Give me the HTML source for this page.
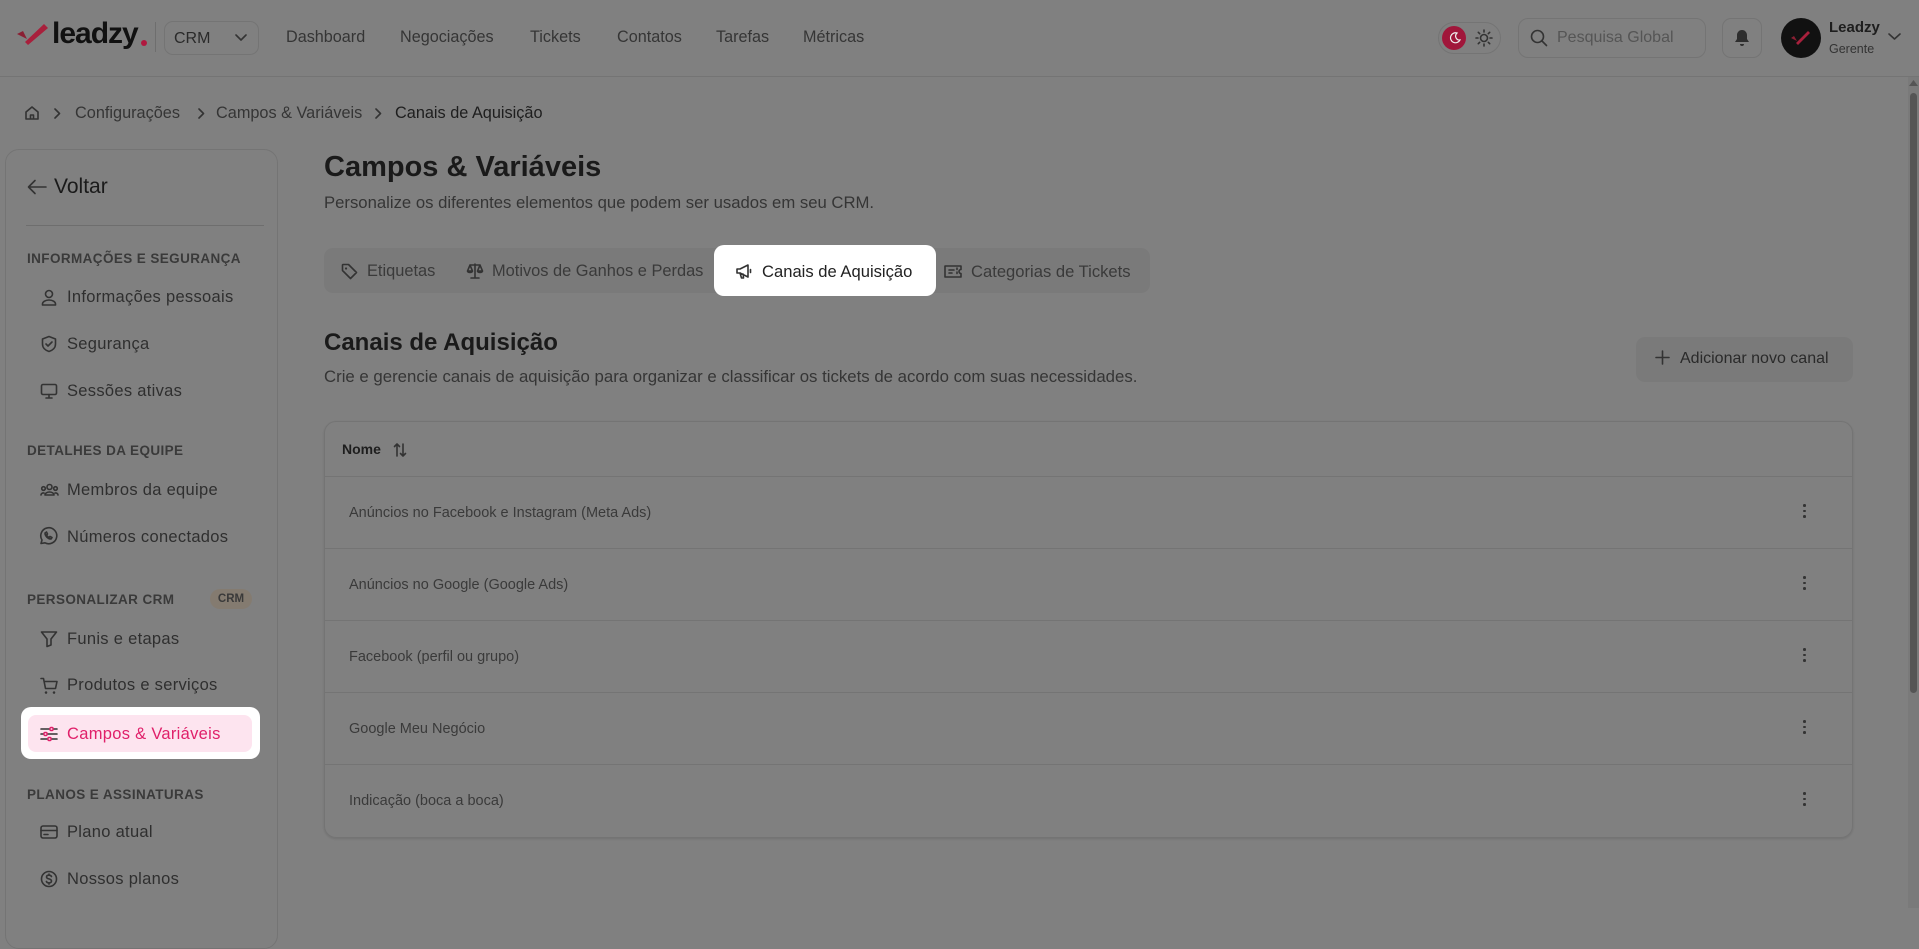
<!DOCTYPE html>
<html><head><meta charset="utf-8">
<style>
*{box-sizing:border-box;margin:0;padding:0}
body{width:1919px;height:908px;overflow:hidden;background:#808080;font-family:"Liberation Sans",sans-serif;color:#2a2a2a;position:relative}
.a{position:absolute;white-space:nowrap}
svg{display:block}
.ic{stroke:#333;fill:none;stroke-width:1.6;stroke-linecap:round;stroke-linejoin:round}
.nav{font-size:16.2px;color:#353535;top:28px}
.sec{font-size:13.5px;font-weight:bold;color:#3a3a3a;letter-spacing:.4px;left:27px}
.it{font-size:16.5px;color:#2f2f2f;left:67px;letter-spacing:.3px}
.sic{left:40px}
.row{position:absolute;left:0;right:0;height:72px;border-top:1px solid #747474}
.row span{position:absolute;left:24px;top:28px;font-size:14.5px;color:#3a3a3a}
.row b{position:absolute;right:46px;top:27px;width:3px}
.row b i{display:block;width:2.5px;height:2.5px;background:#333;border-radius:50%;margin-bottom:3px}
</style></head><body>
<!-- header -->
<div class="a" style="left:0;top:76px;width:1919px;height:1px;background:#747474"></div>
<svg class="a" style="left:15px;top:22px" width="34" height="24" viewBox="0 0 34 24"><path d="M2 12 L8 9 L12 17 Z" fill="#8a1f33"/><path d="M10 20 L29 2 L33 6 L13 23 Z" fill="#a8203c"/></svg>
<div class="a" style="left:52px;top:17px;font-size:30px;font-weight:bold;color:#111;letter-spacing:-1px">leadzy</div>
<div class="a" style="left:141px;top:40px;width:6px;height:6px;border-radius:50%;background:#b0183f"></div>
<div class="a" style="left:155px;top:22px;width:1px;height:30px;background:#6e6e6e"></div>
<div class="a" style="left:164px;top:21px;width:95px;height:34px;border:1px solid #747474;border-radius:9px"></div>
<div class="a" style="left:174px;top:30px;font-size:16px;color:#2a2a2a">CRM</div>
<svg class="a" style="left:235px;top:34px" width="12" height="8"><path class="ic" d="M1 1l5 5 5-5"/></svg>
<div class="a nav" style="left:286px">Dashboard</div>
<div class="a nav" style="left:400px">Negociações</div>
<div class="a nav" style="left:530px">Tickets</div>
<div class="a nav" style="left:617px">Contatos</div>
<div class="a nav" style="left:716px">Tarefas</div>
<div class="a nav" style="left:803px">Métricas</div>
<div class="a" style="left:1438px;top:22px;width:63px;height:32px;border:1px solid #747474;border-radius:16px"></div>
<div class="a" style="left:1442px;top:26px;width:24px;height:24px;border-radius:50%;background:#a0163a"></div>
<svg class="a" style="left:1447px;top:31px" width="14" height="14"><path d="M10 2a5 5 0 1 0 3 7 4 4 0 0 1-3-7z" fill="none" stroke="#eee" stroke-width="1.2"/></svg>
<svg class="a" style="left:1475px;top:29px" width="18" height="18" viewBox="0 0 18 18"><circle cx="9" cy="9" r="3.5" class="ic" stroke-width="1.3"/><path class="ic" stroke-width="1.3" d="M9 1v2M9 15v2M1 9h2M15 9h2M3.3 3.3l1.4 1.4M13.3 13.3l1.4 1.4M3.3 14.7l1.4-1.4M13.3 4.7l1.4-1.4"/></svg>
<div class="a" style="left:1518px;top:18px;width:188px;height:40px;border:1px solid #747474;border-radius:10px"></div>
<svg class="a" style="left:1530px;top:29px" width="18" height="18"><circle cx="7.5" cy="7.5" r="6" class="ic" stroke="#444"/><path class="ic" stroke="#444" d="M12 12l4.5 4.5"/></svg>
<div class="a" style="left:1557px;top:29px;font-size:16px;color:#555">Pesquisa Global</div>
<div class="a" style="left:1722px;top:18px;width:40px;height:40px;border:1px solid #747474;border-radius:9px"></div>
<svg class="a" style="left:1734px;top:29px" width="16" height="18"><path d="M8 1c-3 0-5 2.5-5 5v4l-2 3h14l-2-3V6c0-2.5-2-5-5-5zM6 15a2 2 0 0 0 4 0z" fill="#2e2e2e"/></svg>
<div class="a" style="left:1781px;top:18px;width:40px;height:40px;border-radius:50%;background:#111"></div>
<svg class="a" style="left:1790px;top:29px" width="22" height="18"><path d="M1 9l3-2 3 5z" fill="#8a1f33"/><path d="M6 14L18 2l2 2L8 16z" fill="#a8203c"/></svg>
<div class="a" style="left:1829px;top:19px;font-size:15px;font-weight:bold;color:#1e1e1e">Leadzy</div>
<div class="a" style="left:1829px;top:42px;font-size:12.5px;color:#333">Gerente</div>
<svg class="a" style="left:1888px;top:33px" width="13" height="8"><path class="ic" d="M1 1l5.5 5 5.5-5"/></svg>
<!-- scrollbar -->
<div class="a" style="left:1908px;top:77px;width:11px;height:831px;background:#7a7a7a"></div>
<div class="a" style="left:1910px;top:93px;width:7px;height:600px;border-radius:4px;background:#555"></div>
<svg class="a" style="left:1909px;top:80px" width="9" height="6"><path d="M0 6L4.5 0 9 6z" fill="#555"/></svg>
<!-- breadcrumb -->
<svg class="a" style="left:24px;top:105px" width="16" height="16" viewBox="0 0 16 16"><path class="ic" stroke-width="1.3" d="M2 7l6-5 6 5v7H2zM6.5 14v-4h3v4"/></svg>
<svg class="a" style="left:54px;top:108px" width="7" height="11"><path class="ic" stroke-width="1.3" d="M1 1l4.5 4.5L1 10"/></svg>
<div class="a" style="left:75px;top:104px;font-size:16.3px;color:#353535">Configurações</div>
<svg class="a" style="left:198px;top:108px" width="7" height="11"><path class="ic" stroke-width="1.3" d="M1 1l4.5 4.5L1 10"/></svg>
<div class="a" style="left:216px;top:104px;font-size:16.3px;color:#353535">Campos &amp; Variáveis</div>
<svg class="a" style="left:375px;top:108px" width="7" height="11"><path class="ic" stroke-width="1.3" d="M1 1l4.5 4.5L1 10"/></svg>
<div class="a" style="left:395px;top:104px;font-size:16.3px;color:#1e1e1e">Canais de Aquisição</div>
<!-- sidebar -->
<div class="a" style="left:5px;top:149px;width:273px;height:800px;border:1px solid #747474;border-radius:14px"></div>
<svg class="a" style="left:27px;top:179px" width="20" height="16"><path class="ic" stroke="#222" stroke-width="1.7" d="M19 8H2M8 1.5L1.5 8 8 14.5"/></svg>
<div class="a" style="left:54px;top:175px;font-size:21px;color:#1a1a1a;font-weight:500">Voltar</div>
<div class="a" style="left:26px;top:225px;width:238px;height:1px;background:#6e6e6e"></div>
<div class="a sec" style="top:251px">INFORMAÇÕES E SEGURANÇA</div>
<svg class="a sic" style="top:288px" width="18" height="18"><circle cx="9" cy="6" r="3.5" class="ic"/><path class="ic" d="M2.5 17v-1a6.5 4 0 0 1 13 0v1z"/></svg>
<div class="a it" style="top:288px">Informações pessoais</div>
<svg class="a sic" style="top:335px" width="18" height="18"><path class="ic" d="M9 1.5l6.5 2.5v5c0 4-3 6.5-6.5 7.5-3.5-1-6.5-3.5-6.5-7.5v-5z M6 9l2 2 4-4"/></svg>
<div class="a it" style="top:335px">Segurança</div>
<svg class="a sic" style="top:382px" width="18" height="18"><rect x="1.5" y="2.5" width="15" height="10" rx="1.5" class="ic"/><path class="ic" d="M6 16h6M9 12.5V16"/></svg>
<div class="a it" style="top:382px">Sessões ativas</div>
<div class="a sec" style="top:443px">DETALHES DA EQUIPE</div>
<svg class="a sic" style="top:481px" width="19" height="18"><circle cx="9.5" cy="6" r="2.5" class="ic" stroke-width="1.3"/><circle cx="3.5" cy="7.5" r="1.8" class="ic" stroke-width="1.3"/><circle cx="15.5" cy="7.5" r="1.8" class="ic" stroke-width="1.3"/><path class="ic" stroke-width="1.3" d="M5 14a4.5 3 0 0 1 9 0zM1 14a2.5 2 0 0 1 3-2M18 14a2.5 2 0 0 0-3-2"/></svg>
<div class="a it" style="top:481px">Membros da equipe</div>
<svg class="a sic" style="left:38px;top:526px" width="20" height="20"><path class="ic" d="M3 17.5l1-3.5a8 8 0 1 1 3 2.8z M7 7c0 3 3 6 6 6l1-1.5-2-1-1 1c-1-.5-2-1.5-2.5-2.5l1-1-1-2z"/></svg>
<div class="a it" style="top:528px">Números conectados</div>
<div class="a sec" style="top:592px">PERSONALIZAR CRM</div>
<div class="a" style="left:210px;top:589px;width:42px;height:20px;border-radius:10px;background:#847b70;font-size:11.5px;font-weight:bold;color:#3a3a3a;text-align:center;line-height:20px">CRM</div>
<svg class="a sic" style="top:630px" width="18" height="18"><path class="ic" d="M1.5 2h15l-5.5 7v6l-4 1.5V9z"/></svg>
<div class="a it" style="top:630px">Funis e etapas</div>
<svg class="a sic" style="top:677px" width="19" height="18"><path class="ic" d="M1 1.5h2.5l2 10h10l1.5-7H4.5M6.5 15.5a.5.5 0 1 0 0 .1M14.5 15.5a.5.5 0 1 0 0 .1"/></svg>
<div class="a it" style="top:676px">Produtos e serviços</div>
<div class="a" style="left:21px;top:707px;width:239px;height:52px;background:#fff;border-radius:10px"></div>
<div class="a" style="left:28px;top:715px;width:224px;height:37px;background:#fde4ef;border-radius:8px"></div>
<svg class="a sic" style="top:726px" width="18" height="16"><path class="ic" stroke="#e0206a" d="M1 3h16M1 8h16M1 13h16"/><rect x="10" y="1.5" width="3" height="3" rx="1" fill="#fde4ef" stroke="#e0206a" stroke-width="1.4"/><rect x="4" y="6.5" width="3" height="3" rx="1" fill="#fde4ef" stroke="#e0206a" stroke-width="1.4"/><rect x="8" y="11.5" width="3" height="3" rx="1" fill="#fde4ef" stroke="#e0206a" stroke-width="1.4"/></svg>
<div class="a it" style="top:725px;color:#e0206a">Campos &amp; Variáveis</div>
<div class="a sec" style="top:787px">PLANOS E ASSINATURAS</div>
<svg class="a sic" style="top:824px" width="18" height="16"><rect x="1" y="2" width="16" height="12" rx="2" class="ic"/><path class="ic" d="M1 6.5h16M4 10.5h4"/></svg>
<div class="a it" style="top:823px">Plano atual</div>
<svg class="a sic" style="top:870px" width="18" height="18"><circle cx="9" cy="9" r="7.5" class="ic"/><path class="ic" stroke-width="1.3" d="M11.5 6.5c-.5-1-1.5-1.3-2.5-1.3-1.5 0-2.5.7-2.5 1.8 0 2.5 5 1.3 5 4 0 1.2-1 1.9-2.5 1.9-1.2 0-2.2-.5-2.6-1.4M9 4v1.2M9 12.9v1.2"/></svg>
<div class="a it" style="top:870px">Nossos planos</div>
<!-- main -->
<div class="a" style="left:324px;top:151px;font-size:29px;font-weight:bold;color:#1a1a1a">Campos &amp; Variáveis</div>
<div class="a" style="left:324px;top:193px;font-size:16.7px;color:#353535">Personalize os diferentes elementos que podem ser usados em seu CRM.</div>
<div class="a" style="left:324px;top:248px;width:826px;height:45px;background:#7a7a7a;border-radius:9px"></div>
<svg class="a" style="left:341px;top:263px" width="17" height="17"><path class="ic" stroke="#444" d="M1.5 2v5.5l8 8 6-6-8-8H2zM5 5.2a.3.3 0 1 0 .1 0"/></svg>
<div class="a" style="left:367px;top:262px;font-size:16.4px;color:#3a3a3a">Etiquetas</div>
<svg class="a" style="left:466px;top:262px" width="18" height="18"><path class="ic" stroke="#444" stroke-width="1.3" d="M9 2v14M4 3h10M5 16h8M4 3l-2.5 6h5zM14 3l-2.5 6h5zM1.5 9a2.5 1.5 0 0 0 5 0M11.5 9a2.5 1.5 0 0 0 5 0"/></svg>
<div class="a" style="left:492px;top:262px;font-size:16.4px;color:#3a3a3a">Motivos de Ganhos e Perdas</div>
<div class="a" style="left:714px;top:245px;width:222px;height:51px;background:#fff;border-radius:10px"></div>
<svg class="a" style="left:735px;top:263px" width="18" height="17"><path class="ic" stroke="#333" d="M2 6v4h3l8 4V2L5 6zM5 10l1.5 5h2L8 11M15.5 6.5v3"/></svg>
<div class="a" style="left:762px;top:262px;font-size:16.6px;color:#222">Canais de Aquisição</div>
<svg class="a" style="left:944px;top:264px" width="18" height="15"><path class="ic" stroke="#444" stroke-width="1.3" d="M1 2h16v3.5a2 2 0 0 0 0 4V13H1zM5 6h5M5 9h3M13 4v1.5M13 8v1.5"/></svg>
<div class="a" style="left:971px;top:262px;font-size:16.6px;color:#3a3a3a">Categorias de Tickets</div>
<div class="a" style="left:324px;top:329px;font-size:24px;font-weight:bold;color:#1a1a1a">Canais de Aquisição</div>
<div class="a" style="left:324px;top:367px;font-size:16.8px;color:#353535">Crie e gerencie canais de aquisição para organizar e classificar os tickets de acordo com suas necessidades.</div>
<div class="a" style="left:1636px;top:337px;width:217px;height:45px;background:#7a7a7a;border-radius:9px"></div>
<svg class="a" style="left:1655px;top:350px" width="15" height="15"><path class="ic" stroke="#333" d="M7.5 1v13M1 7.5h13"/></svg>
<div class="a" style="left:1680px;top:350px;font-size:16px;color:#2a2a2a">Adicionar novo canal</div>
<div class="a" style="left:324px;top:421px;width:1529px;height:417px;border:1px solid #747474;border-radius:12px;box-shadow:0 1px 2px rgba(0,0,0,.12)">
  <div class="a" style="left:17px;top:19px;font-size:14px;font-weight:bold;color:#1e1e1e">Nome</div>
  <svg class="a" style="left:68px;top:20px" width="14" height="16"><path class="ic" stroke="#555" stroke-width="1.2" d="M4 14V2M1.5 4.5L4 2l2.5 2.5M10 2v12M7.5 11.5L10 14l2.5-2.5"/></svg>
  <div class="row" style="top:54px"><span>Anúncios no Facebook e Instagram (Meta Ads)</span><b><i></i><i></i><i></i></b></div>
  <div class="row" style="top:126px"><span>Anúncios no Google (Google Ads)</span><b><i></i><i></i><i></i></b></div>
  <div class="row" style="top:198px"><span>Facebook (perfil ou grupo)</span><b><i></i><i></i><i></i></b></div>
  <div class="row" style="top:270px"><span>Google Meu Negócio</span><b><i></i><i></i><i></i></b></div>
  <div class="row" style="top:342px"><span>Indicação (boca a boca)</span><b><i></i><i></i><i></i></b></div>
</div>
</body></html>
